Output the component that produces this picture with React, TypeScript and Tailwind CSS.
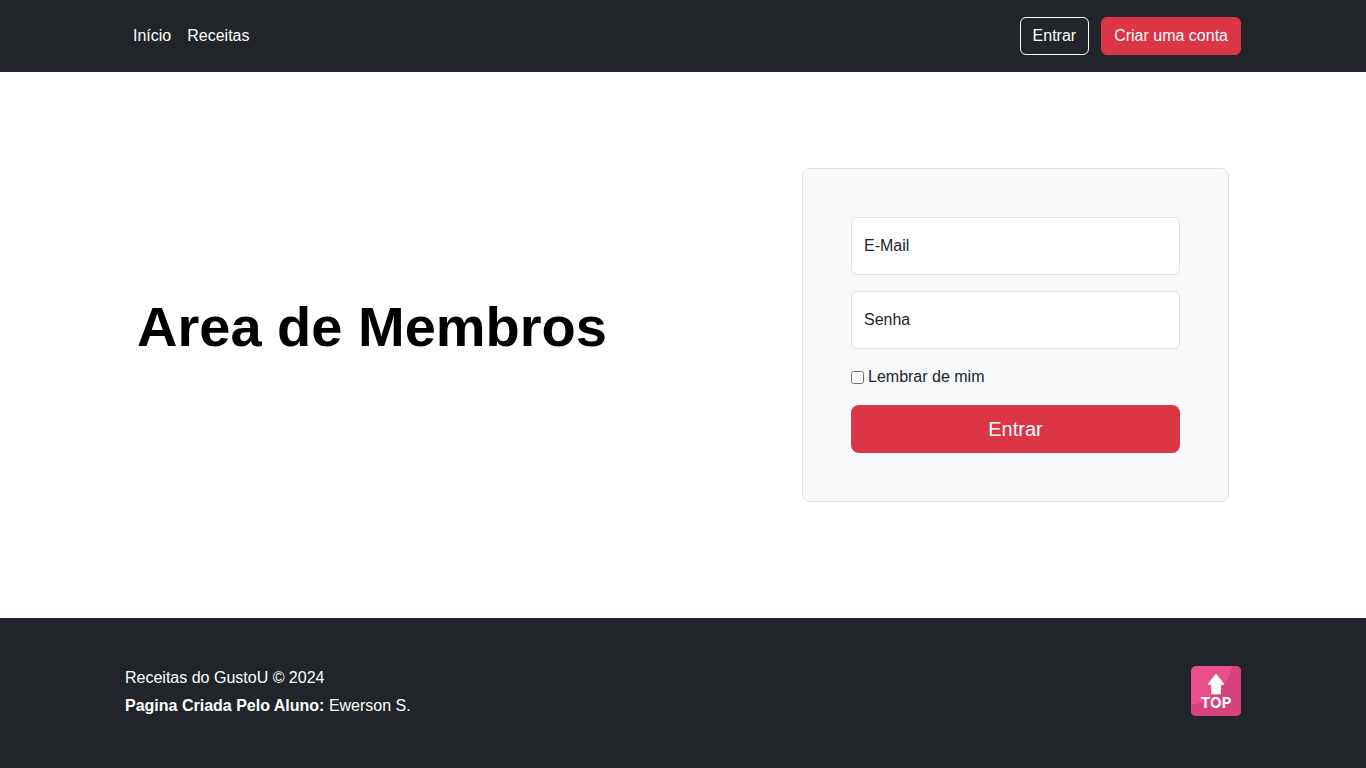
import React, { useState } from "react";

function TopIcon() {
  return (
    <svg viewBox="0 0 50 50" className="size-[50px]" aria-hidden="true">
      <rect width="50" height="50" rx="5" fill="#e94f8a" />
      <path d="M41 0h4a5 5 0 0 1 5 5v40a5 5 0 0 1-5 5H5a5 5 0 0 1-5-5v-6C20 36 38 20 41 0z" fill="#d5437c" />
      <path d="M25 8l7.500 9.500q.5 1-.5 1h-2.500v9q0 .5-.5.5h-8q-.5 0-.5-.5v-9H18q-1 0-.5-1z" fill="#fff" stroke="#fff" strokeWidth="0.8" strokeLinejoin="round" />
      <text x="25" y="42" textAnchor="middle" fill="#fff" fontSize="15" fontWeight="700" fontFamily="Inter, sans-serif">TOP</text>
    </svg>
  );
}

function Field({ id, label, type }: { id: string; label: string; type: string }) {
  const [value, setValue] = useState("");
  return (
    <div className="relative mb-4">
      <input
        id={id}
        type={type}
        value={value}
        onChange={(e) => setValue(e.target.value)}
        className="block h-[58px] w-full rounded-md border border-[#dee2e6] bg-white px-3 pt-5 outline-none focus:border-[#86b7fe]"
      />
      <label htmlFor={id} className={value ? "pointer-events-none absolute left-3 top-1 text-sm" : "pointer-events-none absolute left-[13px] top-[17px]"}>
        {label}
      </label>
    </div>
  );
}

export default function App() {
  return (
    <div className="flex min-h-screen flex-col bg-white font-['Liberation_Sans',Arial,sans-serif] text-base text-[#212529]">
      <header className="bg-[#212529] py-4 text-white">
        <div className="mx-auto flex w-full max-w-[1140px] items-center justify-between px-3">
          <nav className="flex">
            <a href="#" className="px-2 py-2">Início</a>
            <a href="#" className="px-2 py-2">Receitas</a>
          </nav>
          <div className="flex gap-3">
            <button type="button" className="rounded-md border border-white px-3 py-1.5">Entrar</button>
            <button type="button" className="rounded-md border border-[#dc3545] bg-[#dc3545] px-3 py-1.5">Criar uma conta</button>
          </div>
        </div>
      </header>

      <main className="mx-auto grid w-full max-w-[1140px] grow grid-cols-12 content-start items-center gap-x-12 px-6 pt-24 pb-20">
        <h1 className="col-span-7 pb-4 text-[56px] leading-none font-bold text-black">Area de Membros</h1>
        <form className="col-span-5 rounded-lg border border-[#dee2e6] bg-[#f8f9fa] p-12" onSubmit={(e) => e.preventDefault()}>
          <Field id="email" label="E-Mail" type="email" />
          <Field id="senha" label="Senha" type="password" />
          <label className="mb-4 flex items-center gap-1">
            <input type="checkbox" className="size-[13px]" />
            Lembrar de mim
          </label>
          <button type="submit" className="h-12 w-full rounded-lg bg-[#dc3545] text-xl text-white">Entrar</button>
        </form>
      </main>

      <footer className="bg-[#212529] pt-12 pb-[50px] text-white">
        <div className="mx-auto flex w-full max-w-[1140px] justify-between px-3">
          <div className="flex flex-col gap-1">
            <p>Receitas do GustoU © 2024</p>
            <p><strong>Pagina Criada Pelo Aluno:</strong> Ewerson S.</p>
          </div>
          <a href="#" aria-label="Top"><TopIcon /></a>
        </div>
      </footer>
    </div>
  );
}
